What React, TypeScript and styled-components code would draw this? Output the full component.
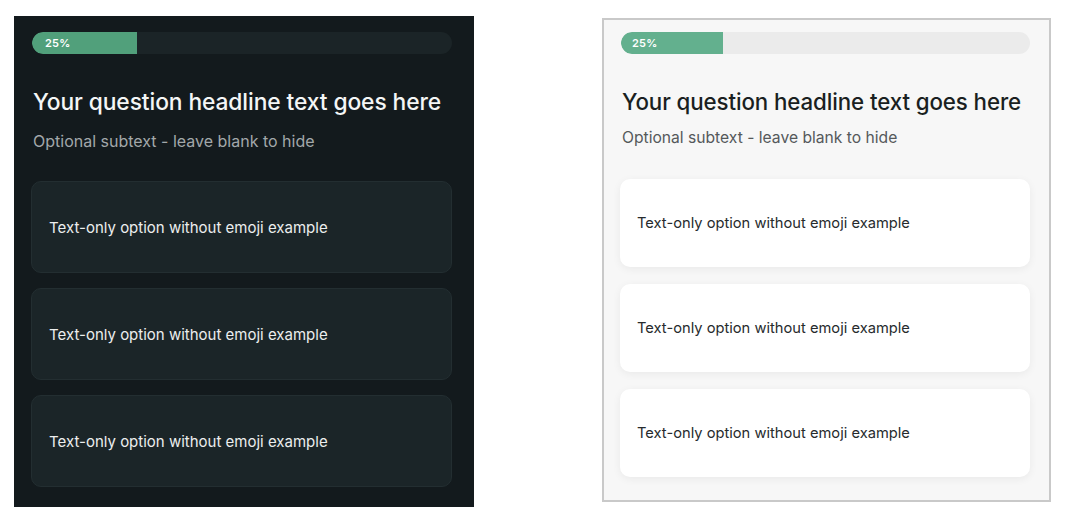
import React from "react";
import styled, { createGlobalStyle, css } from "styled-components";

type Tone = "dark" | "light";

const GlobalStyle = createGlobalStyle`
  html, body {
    margin: 0;
    padding: 0;
    background: #ffffff;
  }

  body {
    font-family: Inter, "Noto Sans", sans-serif;
    -webkit-font-smoothing: antialiased;
  }
`;

const Page = styled.div`
  display: flex;
  align-items: flex-start;
  gap: 128px;
  padding: 16px 0 0 14px;
`;

const Panel = styled.section<{ $tone: Tone }>`
  box-sizing: border-box;
  display: flex;
  flex-direction: column;

  ${({ $tone }) =>
    $tone === "dark"
      ? css`
          width: 460px;
          height: 491px;
          padding: 16px 22px 0 17px;
          background: #131a1d;
        `
      : css`
          width: 449px;
          height: 484px;
          margin-top: 2px;
          padding: 12px 19px 0 16px;
          background: #f7f7f7;
          border: 2px solid #c9c9c9;
        `}
`;

const Track = styled.div<{ $tone: Tone }>`
  position: relative;
  height: 22px;
  margin-left: 1px;
  border-radius: 11px;
  overflow: hidden;
  background: ${({ $tone }) => ($tone === "dark" ? "#1b2427" : "#ebebeb")};
`;

const Fill = styled.div<{ $tone: Tone }>`
  height: 100%;
  display: flex;
  align-items: center;
  padding-left: ${({ $tone }) => ($tone === "dark" ? "13px" : "11px")};
  box-sizing: border-box;
  border-radius: 11px 0 0 11px;
  background: ${({ $tone }) => ($tone === "dark" ? "#51a07b" : "#63b08e")};
  color: #ffffff;
  font-size: 11px;
  font-weight: 600;
  letter-spacing: 0.2px;
`;

const Headline = styled.h1<{ $tone: Tone }>`
  margin: 34px 0 0 2px;
  font-size: ${({ $tone }) => ($tone === "dark" ? "22.8px" : "22.3px")};
  line-height: 28px;
  font-weight: 500;
  letter-spacing: -0.1px;
  color: ${({ $tone }) => ($tone === "dark" ? "#f4f6f6" : "#1a1f21")};
`;

const Subtext = styled.p<{ $tone: Tone }>`
  margin: ${({ $tone }) => ($tone === "dark" ? "13px" : "10px")} 0 0 2px;
  font-size: ${({ $tone }) => ($tone === "dark" ? "16px" : "15.65px")};
  line-height: 24px;
  font-weight: 400;
  color: ${({ $tone }) => ($tone === "dark" ? "#a2a8aa" : "#55595b")};
`;

const Options = styled.div<{ $tone: Tone }>`
  display: flex;
  flex-direction: column;
  gap: ${({ $tone }) => ($tone === "dark" ? "15px" : "17px")};
  margin-top: ${({ $tone }) => ($tone === "dark" ? "28px" : "29px")};
`;

const Option = styled.div<{ $tone: Tone }>`
  box-sizing: border-box;
  display: flex;
  align-items: center;
  padding: 0 18px 0 17px;
  border-radius: 10px;
  font-weight: 400;

  ${({ $tone }) =>
    $tone === "dark"
      ? css`
          height: 92px;
          font-size: 15px;
          background: #1b2528;
          border: 1px solid #232e31;
          color: #eceeee;
        `
      : css`
          height: 88px;
          font-size: 14.7px;
          background: #ffffff;
          box-shadow: 0 2px 8px rgba(0, 0, 0, 0.06);
          color: #272b2d;
        `}
`;

const options = [
  "Text-only option without emoji example",
  "Text-only option without emoji example",
  "Text-only option without emoji example",
];

const QuestionPanel: React.FC<{ tone: Tone; progress: number }> = ({
  tone,
  progress,
}) => (
  <Panel $tone={tone}>
    <Track $tone={tone}>
      <Fill $tone={tone} style={{ width: `${progress}%` }}>
        {progress}%
      </Fill>
    </Track>
    <Headline $tone={tone}>Your question headline text goes here</Headline>
    <Subtext $tone={tone}>Optional subtext - leave blank to hide</Subtext>
    <Options $tone={tone}>
      {options.map((label, i) => (
        <Option key={i} $tone={tone}>
          {label}
        </Option>
      ))}
    </Options>
  </Panel>
);

const App: React.FC = () => (
  <>
    <GlobalStyle />
    <Page>
      <QuestionPanel tone="dark" progress={25} />
      <QuestionPanel tone="light" progress={25} />
    </Page>
  </>
);

export default App;
